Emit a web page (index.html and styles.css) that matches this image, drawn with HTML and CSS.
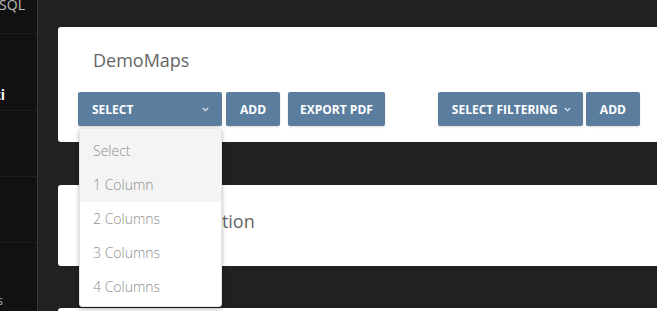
FILE: index.html
```html
<!DOCTYPE html>
<html lang="en">
<head>
    <meta charset="UTF-8">
    <meta name="viewport" content="width=device-width, initial-scale=1.0">
    <title>DemoMaps</title>
    <link rel="stylesheet" href="styles.css">
</head>
<body>
    <aside class="sidebar">
        <div class="side-item side-top"><span>PostgreSQL</span></div>
        <div class="side-item side-active"><span>Dati</span></div>
        <div class="side-item"></div>
        <div class="side-item"></div>
        <div class="side-item side-bottom"><span>Settings</span></div>
    </aside>

    <main class="content">
        <section class="card">
            <h2 class="card-title">DemoMaps</h2>
            <div class="toolbar">
                <div class="dropdown">
                    <button class="btn btn-select">
                        <span>Select</span>
                        <svg class="chevron" width="7" height="5" viewBox="0 0 7 5"><polyline points="0.8,1 3.5,3.6 6.2,1" fill="none" stroke="currentColor" stroke-width="1.2"/></svg>
                    </button>
                    <ul class="dropdown-menu">
                        <li class="menu-item is-first">Select</li>
                        <li class="menu-item is-hover">1 Column</li>
                        <li class="menu-item">2 Columns</li>
                        <li class="menu-item">3 Columns</li>
                        <li class="menu-item">4 Columns</li>
                    </ul>
                </div>
                <button class="btn">Add</button>
                <button class="btn btn-export">Export PDF</button>

                <button class="btn btn-filter">
                    <span>Select Filtering</span>
                    <svg class="chevron" width="7" height="5" viewBox="0 0 7 5"><polyline points="0.8,1 3.5,3.6 6.2,1" fill="none" stroke="currentColor" stroke-width="1.2"/></svg>
                </button>
                <button class="btn btn-tight">Add</button>
            </div>
        </section>

        <section class="card card-small">
            <h2 class="card-title">Filter Configuration</h2>
        </section>

        <section class="card card-small"></section>
    </main>
</body>
</html>
```

FILE: styles.css
```css
:root {
    --sidebar-bg: #111111;
    --main-bg: #212121;
    --btn-color: #5b7e9f;
    --title-color: #666;
    --menu-text: #8e8e8e;
    --menu-hover: #f4f4f4;
}

* {
    box-sizing: border-box;
}

body {
    margin: 0;
    height: 311px;
    overflow: hidden;
    display: flex;
    background-color: var(--main-bg);
    font-family: 'Open Sans', 'Noto Sans', sans-serif;
}

/* sidebar */

.sidebar {
    width: 38px;
    flex-shrink: 0;
    background-color: var(--sidebar-bg);
    border-right: 1px solid #3b3b3b;
    display: flex;
    flex-direction: column;
    overflow: hidden;
}

.side-item {
    display: flex;
    justify-content: flex-end;
    border-bottom: 1px solid #1f1f1f;
    white-space: nowrap;
    height: 69px;
}

.side-item span {
    font-size: 14px;
    line-height: 16px;
}

.side-top {
    height: 36px;
    align-items: flex-start;
    padding-right: 12px;
}

.side-top span {
    color: #bdbdbd;
    margin-top: -3px;
}

.side-active {
    height: 78px;
    padding-top: 53px;
    padding-right: 32px;
}

.side-active span {
    color: #fff;
    font-weight: 700;
}

.side-bottom {
    border-bottom: none;
    padding-top: 50px;
    padding-right: 34px;
}

.side-bottom span {
    color: #aaa;
    font-size: 12px;
}

/* main */

.content {
    flex: 1;
    padding: 27px 0 0 20px;
    overflow: hidden;
}

.card {
    background-color: #fff;
    border-radius: 3px 0 0 3px;
    padding: 21px 0 16px 0;
    margin-bottom: 43px;
}

.card-title {
    margin: 0 0 20px 35px;
    font-size: 18px;
    line-height: 24px;
    font-weight: 400;
    color: var(--title-color);
}

.card-small {
    height: 81px;
    padding-top: 24px;
    margin-bottom: 42px;
}

.toolbar {
    display: flex;
    align-items: flex-start;
    padding-left: 20px;
}

.btn {
    height: 34px;
    padding: 0 14px;
    border: none;
    border-radius: 2px;
    background-color: var(--btn-color);
    color: #fff;
    font-family: 'Open Sans', 'Noto Sans', sans-serif;
    font-size: 12px;
    font-weight: 700;
    text-transform: uppercase;
    white-space: nowrap;
    display: flex;
    align-items: center;
    box-shadow: 0 1px 2px rgba(0, 0, 0, 0.15);
    margin-left: 4px;
}

.chevron {
    color: #dfe6ee;
    flex-shrink: 0;
}

.dropdown {
    position: relative;
}

.btn-select {
    width: 144px;
    margin-left: 0;
    justify-content: space-between;
    padding-right: 13px;
}

.btn-export {
    margin-left: 8px;
    padding: 0 12px;
}

.btn-filter {
    width: 145px;
    margin-left: 53px;
    gap: 6px;
}

.btn-tight {
    margin-left: 3px;
}

.dropdown-menu {
    position: absolute;
    top: 36px;
    left: 1px;
    width: 143px;
    margin: 0;
    padding: 0 0 2px 0;
    list-style: none;
    background-color: #fff;
    border: 1px solid #e6e6e6;
    border-radius: 3px;
    box-shadow: 0 2px 4px rgba(0, 0, 0, 0.3);
    z-index: 10;
}

.menu-item {
    height: 34px;
    line-height: 34px;
    padding-left: 13px;
    font-size: 14px;
    font-weight: 300;
    color: var(--menu-text);
}

.menu-item.is-first {
    height: 39px;
    padding-top: 5px;
    background-color: var(--menu-hover);
}

.menu-item.is-hover {
    background-color: var(--menu-hover);
}
```
